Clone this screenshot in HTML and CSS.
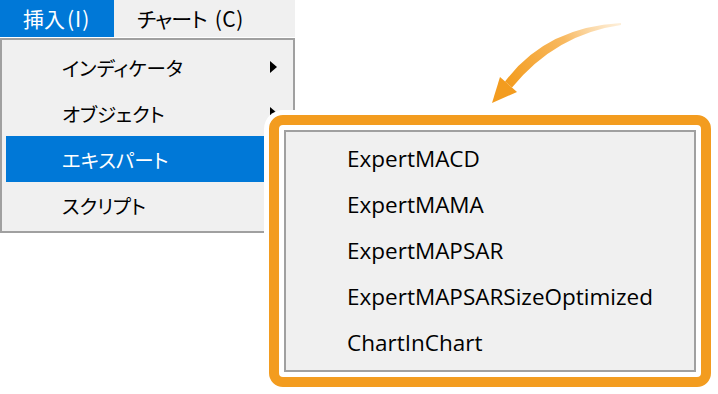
FILE: index.html
```html
<!DOCTYPE html>
<html lang="ja">
<head>
<meta charset="utf-8">
<link rel="stylesheet" href="styles.css">
</head>
<body>
<div class="page">
  <div class="menubar">
    <div class="mb-item active">挿入<span class="acc">(I)</span></div>
    <div class="mb-item tight">チャート <span class="acc2">(C)</span></div>
  </div>
  <div class="dropdown">
    <div class="row"><span>インディケータ</span><span class="sub-arrow"></span></div>
    <div class="row"><span>オブジェクト</span><span class="sub-arrow"></span></div>
    <div class="row selected"><span>エキスパート</span></div>
    <div class="row"><span>スクリプト</span></div>
  </div>
  <div class="callout">
    <div class="ring">
      <div class="submenu">
        <div class="srow">ExpertMACD</div>
        <div class="srow">ExpertMAMA</div>
        <div class="srow">ExpertMAPSAR</div>
        <div class="srow">ExpertMAPSARSizeOptimized</div>
        <div class="srow">ChartInChart</div>
      </div>
    </div>
  </div>
  <svg class="curve" width="718" height="394" viewBox="0 0 718 394">
    <defs>
      <linearGradient id="g" gradientUnits="userSpaceOnUse" x1="622" y1="24" x2="510" y2="88">
        <stop offset="0" stop-color="#fde6c4" stop-opacity="0.6"/>
        <stop offset="0.45" stop-color="#f8b960"/>
        <stop offset="1" stop-color="#f39c1f"/>
      </linearGradient>
    </defs>
    <path d="M505 81.5 Q546 27 621 23 L621 25 Q556 34 512 87.5 Z" fill="url(#g)"/>
    <path d="M492 103 L500 77 L517 92 Z" fill="#f39c1f"/>
  </svg>
</div>
</body>
</html>
```
FILE: styles.css
```css
html, body {
  margin: 0;
  padding: 0;
  background: #ffffff;
}
.page {
  position: relative;
  width: 718px;
  height: 394px;
  overflow: hidden;
  font-family: "Noto Sans CJK JP", "Open Sans", sans-serif;
  color: #000;
}
.menubar {
  display: flex;
  width: 295px;
  height: 37px;
  background: #f0f0f0;
}
.mb-item {
  box-sizing: border-box;
  height: 37px;
  line-height: 37px;
  font-size: 21px;
  padding-left: 23px;
  font-feature-settings: "palt";
}
.mb-item.tight {
  letter-spacing: -0.8px;
}
.mb-item .acc {
  letter-spacing: 1px;
  margin-left: 2px;
}
.mb-item .acc2 {
  margin-left: 4px;
  letter-spacing: 0.5px;
}
.mb-item.active {
  width: 114px;
  background: #0078d7;
  color: #ffffff;
}
.dropdown {
  box-sizing: border-box;
  width: 295px;
  margin-top: 1px;
  border: 2px solid #a0a0a0;
  background: #f0f0f0;
  padding: 4px 4px 3px 4px;
}
.row {
  display: flex;
  align-items: center;
  justify-content: space-between;
  height: 46px;
  padding-left: 56px;
  padding-right: 12px;
  font-size: 19.5px;
  font-feature-settings: "palt";
}
.row.selected {
  background: #0078d7;
  color: #ffffff;
}
.sub-arrow {
  width: 0;
  height: 0;
  border-left: 7px solid #000;
  border-top: 6px solid transparent;
  border-bottom: 6px solid transparent;
}
.callout {
  position: absolute;
  left: 264px;
  top: 110px;
  box-sizing: border-box;
  width: 452px;
  height: 282px;
  background: #ffffff;
  border-radius: 19px;
  padding: 5px;
}
.ring {
  box-sizing: border-box;
  height: 100%;
  border: 10px solid #f39c1f;
  border-radius: 14px;
  padding: 5px;
  background: #ffffff;
}
.submenu {
  box-sizing: border-box;
  height: 100%;
  border: 2px solid #a0a0a0;
  background: #f0f0f0;
  padding-top: 4px;
}
.srow {
  height: 46px;
  line-height: 46px;
  padding-left: 61px;
  font-family: "Open Sans", sans-serif;
  font-size: 22.5px;
  color: #000;
}
.curve {
  position: absolute;
  left: 0;
  top: 0;
  pointer-events: none;
}
```
